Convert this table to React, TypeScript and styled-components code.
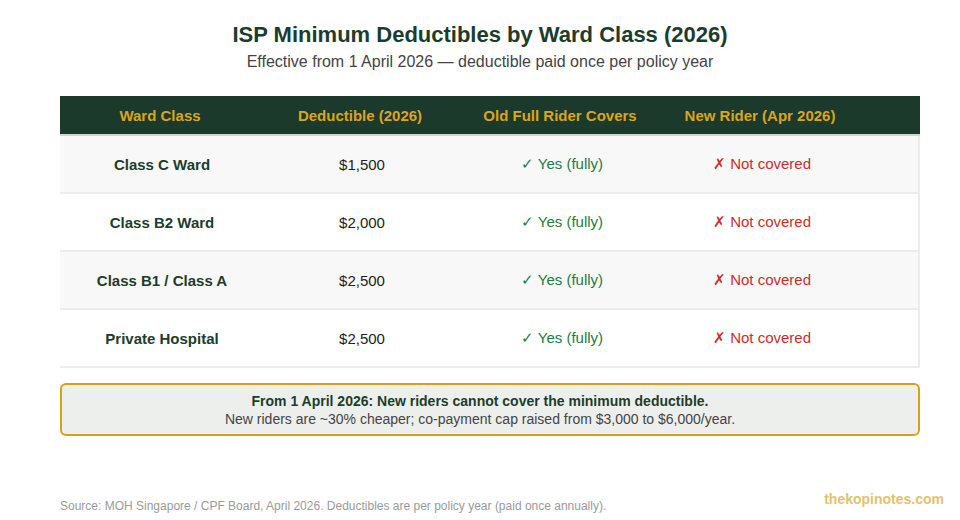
import React from 'react';
import styled, { createGlobalStyle } from 'styled-components';

const GlobalStyle = createGlobalStyle`
  html, body {
    margin: 0;
    padding: 0;
    background: #ffffff;
  }
  body {
    font-family: "Liberation Sans", Arial, sans-serif;
  }
`;

type Row = { ward: string; deductible: string };

const rows: Row[] = [
  { ward: 'Class C Ward', deductible: '$1,500' },
  { ward: 'Class B2 Ward', deductible: '$2,000' },
  { ward: 'Class B1 / Class A', deductible: '$2,500' },
  { ward: 'Private Hospital', deductible: '$2,500' },
];

const headers = ['Ward Class', 'Deductible (2026)', 'Old Full Rider Covers', 'New Rider (Apr 2026)'];

export default function App() {
  return (
    <>
      <GlobalStyle />
      <PageS>
        <TitleS>ISP Minimum Deductibles by Ward Class (2026)</TitleS>
        <SubtitleS>Effective from 1 April 2026 — deductible paid once per policy year</SubtitleS>

        <TableS>
          <HeadRowS>
            {headers.map((h) => (
              <HeadCellS key={h}>{h}</HeadCellS>
            ))}
          </HeadRowS>
          {rows.map((r, i) => (
            <RowS key={r.ward} $alt={i % 2 === 0} $last={i === rows.length - 1}>
              <WardCellS>{r.ward}</WardCellS>
              <CellS>{r.deductible}</CellS>
              <CellS $tone="yes">✓ Yes (fully)</CellS>
              <CellS $tone="no">✗ Not covered</CellS>
            </RowS>
          ))}
        </TableS>

        <CalloutS>
          <CalloutTitleS>From 1 April 2026: New riders cannot cover the minimum deductible.</CalloutTitleS>
          <CalloutTextS>New riders are ~30% cheaper; co-payment cap raised from $3,000 to $6,000/year.</CalloutTextS>
        </CalloutS>

        <FooterS>
          <SourceS>Source: MOH Singapore / CPF Board, April 2026. Deductibles are per policy year (paid once annually).</SourceS>
          <BrandS>thekopinotes.com</BrandS>
        </FooterS>
      </PageS>
    </>
  );
}

const PageS = styled.div`
  width: 960px;
  height: 520px;
  box-sizing: border-box;
  padding: 22px 60px 0;
  display: flex;
  flex-direction: column;
  align-items: stretch;
`;

const TitleS = styled.h1`
  margin: 0;
  text-align: center;
  font-size: 22px;
  line-height: 26px;
  font-weight: 700;
  color: #1c3d2c;
`;

const SubtitleS = styled.p`
  margin: 4px 0 0;
  text-align: center;
  font-size: 16px;
  line-height: 20px;
  color: #444;
`;

const TableS = styled.div`
  margin: 24px -20px 0 0;
  border: 2px solid #ececec;
  border-top: 0;
`;

const HeadRowS = styled.div`
  display: grid;
  grid-template-columns: repeat(4, 200px);
  height: 38px;
  margin: 0 -2px;
  background: #1c3a2b;
  border-bottom: 2px solid #d2d6d3;
  align-items: center;
`;

const HeadCellS = styled.div`
  text-align: center;
  font-size: 15px;
  font-weight: 700;
  color: #d9a521;
`;

const RowS = styled.div<{ $alt: boolean; $last: boolean }>`
  display: grid;
  grid-template-columns: repeat(4, 200px);
  height: 56px;
  align-items: center;
  margin-left: -2px;
  padding-left: 2px;
  background: ${(p) => (p.$alt ? '#f8f8f8' : '#ffffff')};
  border-bottom: ${(p) => (p.$last ? '0' : '2px solid #ececec')};
`;

const CellS = styled.div<{ $tone?: 'yes' | 'no' }>`
  text-align: center;
  font-size: 15px;
  color: ${(p) => (p.$tone === 'yes' ? '#1f7a45' : p.$tone === 'no' ? '#c62f2a' : '#222')};
`;

const WardCellS = styled(CellS)`
  font-weight: 700;
  color: #1c3d2c;
`;

const CalloutS = styled.div`
  margin: 15px -20px 0 0;
  padding-right: 20px;
  height: 53px;
  box-sizing: border-box;
  border: 2px solid #d6a21e;
  border-radius: 6px;
  background: #edefed;
  display: flex;
  flex-direction: column;
  align-items: center;
  justify-content: center;
  gap: 2px;
`;

const CalloutTitleS = styled.div`
  font-size: 14px;
  font-weight: 700;
  color: #1c3d2c;
`;

const CalloutTextS = styled.div`
  font-size: 14px;
  color: #444;
`;

const FooterS = styled.div`
  margin-top: auto;
  margin-right: -44px;
  height: 38px;
  display: flex;
  justify-content: space-between;
  align-items: flex-start;
`;

const SourceS = styled.div`
  padding-top: 17px;
  font-size: 12px;
  color: #9a9a9a;
`;

const BrandS = styled.div`
  padding-top: 9px;
  font-size: 14px;
  font-weight: 700;
  color: #e3c26e;
`;
